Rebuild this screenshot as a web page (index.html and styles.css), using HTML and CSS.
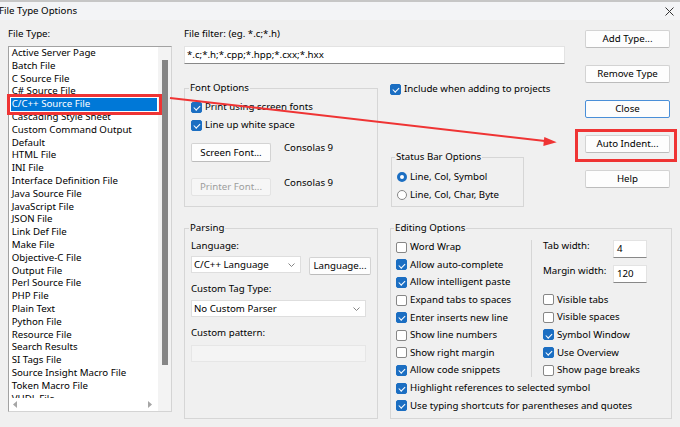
FILE: index.html
```html
<!DOCTYPE html>
<html>
<head>
<meta charset="utf-8">
<title>File Type Options</title>
<link rel="stylesheet" href="styles.css">
</head>
<body>
<div class="window">
  <header class="titlebar">
    <span class="title">File Type Options</span>
    <svg class="close" width="9" height="9" viewBox="0 0 9 9"><path d="M0.5 0.5L8.5 8.5M8.5 0.5L0.5 8.5" stroke="#333" stroke-width="1"/></svg>
  </header>
  <main class="body">
    <section class="col-list">
      <div class="label">File Type:</div>
      <div class="listbox">
        <div class="list-view">
          <ul class="items">
            <li>Active Server Page</li>
            <li>Batch File</li>
            <li>C Source File</li>
            <li>C# Source File</li>
            <li class="sel">C/C++ Source File</li>
            <li>Cascading Style Sheet</li>
            <li>Custom Command Output</li>
            <li>Default</li>
            <li>HTML File</li>
            <li>INI File</li>
            <li>Interface Definition File</li>
            <li>Java Source File</li>
            <li>JavaScript File</li>
            <li>JSON File</li>
            <li>Link Def File</li>
            <li>Make File</li>
            <li>Objective-C File</li>
            <li>Output File</li>
            <li>Perl Source File</li>
            <li>PHP File</li>
            <li>Plain Text</li>
            <li>Python File</li>
            <li>Resource File</li>
            <li>Search Results</li>
            <li>SI Tags File</li>
            <li>Source Insight Macro File</li>
            <li>Token Macro File</li>
            <li>VHDL File</li>
          </ul>
          <div class="hscroll">
            <svg width="4" height="7" viewBox="0 0 4 7"><path d="M4 0L0 3.5L4 7Z" fill="#a6a6a6"/></svg>
            <svg width="4" height="7" viewBox="0 0 4 7"><path d="M0 0L4 3.5L0 7Z" fill="#a6a6a6"/></svg>
          </div>
        </div>
        <div class="vscroll"><div class="thumb"></div></div>
      </div>
    </section>

    <section class="col-main">
      <div class="top">
        <div class="top-left">
          <div class="label">File filter: (eg. *.c;*.h)</div>
          <div class="input filter">*.c;*.h;*.cpp;*.hpp;*.cxx;*.hxx</div>
          <div class="mid-row">
            <fieldset class="group font-opts">
              <legend>Font Options</legend>
              <div class="row"><span class="cb on"></span><span>Print using screen fonts</span></div>
              <div class="row"><span class="cb on"></span><span>Line up white space</span></div>
              <div class="font-row first"><button class="btn">Screen Font...</button><span class="font-name">Consolas 9</span></div>
              <div class="font-row second"><button class="btn disabled">Printer Font...</button><span class="font-name">Consolas 9</span></div>
            </fieldset>
            <div class="mid-right">
              <div class="row include"><span class="cb on"></span><span>Include when adding to projects</span></div>
              <fieldset class="group status">
                <legend>Status Bar Options</legend>
                <div class="row"><span class="rb on"></span><span>Line, Col, Symbol</span></div>
                <div class="row"><span class="rb"></span><span>Line, Col, Char, Byte</span></div>
              </fieldset>
            </div>
          </div>
        </div>
        <div class="buttons">
          <button class="btn">Add Type...</button>
          <button class="btn">Remove Type</button>
          <button class="btn default">Close</button>
          <button class="btn">Auto Indent...</button>
          <button class="btn">Help</button>
        </div>
      </div>

      <div class="bottom">
        <fieldset class="group parsing">
          <legend>Parsing</legend>
          <div class="p-label">Language:</div>
          <div class="combo-row">
            <div class="combo lang"><span>C/C++ Language</span><svg width="7" height="4" viewBox="0 0 7 4"><path d="M0.5 0.5L3.5 3.5L6.5 0.5" fill="none" stroke="#777" stroke-width="0.9"/></svg></div>
            <button class="btn">Language...</button>
          </div>
          <div class="p-label l2">Custom Tag Type:</div>
          <div class="combo tag"><span>No Custom Parser</span><svg width="7" height="4" viewBox="0 0 7 4"><path d="M0.5 0.5L3.5 3.5L6.5 0.5" fill="none" stroke="#777" stroke-width="0.9"/></svg></div>
          <div class="p-label l3">Custom pattern:</div>
          <div class="disabled-input"></div>
        </fieldset>

        <fieldset class="group editing">
          <legend>Editing Options</legend>
          <div class="edit-cols">
            <div class="edit-left">
              <div class="erow"><span class="cb"></span><span>Word Wrap</span></div>
              <div class="erow"><span class="cb on"></span><span>Allow auto-complete</span></div>
              <div class="erow"><span class="cb on"></span><span>Allow intelligent paste</span></div>
              <div class="erow"><span class="cb"></span><span>Expand tabs to spaces</span></div>
              <div class="erow"><span class="cb on"></span><span>Enter inserts new line</span></div>
              <div class="erow"><span class="cb"></span><span>Show line numbers</span></div>
              <div class="erow"><span class="cb"></span><span>Show right margin</span></div>
              <div class="erow"><span class="cb on"></span><span>Allow code snippets</span></div>
            </div>
            <div class="edit-right">
              <div class="num-row"><span class="num-label">Tab width:</span><div class="input num">4</div></div>
              <div class="num-row m"><span class="num-label">Margin width:</span><div class="input num">120</div></div>
              <div class="checks">
                <div class="erow"><span class="cb"></span><span>Visible tabs</span></div>
                <div class="erow"><span class="cb"></span><span>Visible spaces</span></div>
                <div class="erow"><span class="cb on"></span><span>Symbol Window</span></div>
                <div class="erow"><span class="cb on"></span><span>Use Overview</span></div>
                <div class="erow"><span class="cb"></span><span>Show page breaks</span></div>
              </div>
            </div>
          </div>
          <div class="erow"><span class="cb on"></span><span>Highlight references to selected symbol</span></div>
          <div class="erow"><span class="cb on"></span><span>Use typing shortcuts for parentheses and quotes</span></div>
        </fieldset>
      </div>
    </section>
  </main>

  <div class="mark mark-list"></div>
  <div class="mark mark-indent"></div>
  <svg class="arrow" width="680" height="427" viewBox="0 0 680 427">
    <line x1="170" y1="98" x2="545" y2="140.9" stroke="#ef3434" stroke-width="2"/>
    <polygon points="556.7,142.3 543.3,146 544.3,136.9" fill="#ef3434"/>
  </svg>
</div>
</body>
</html>
```

FILE: styles.css
```css
* { box-sizing: border-box; }
html, body { margin: 0; padding: 0; }
body {
  background: #f0f0f0;
  font-family: "Noto Sans", "Segoe UI", sans-serif;
  font-size: 9.7px;
  line-height: 14px;
  color: #000;
}
.window {
  position: relative;
  width: 680px;
  height: 427px;
  overflow: hidden;
  background: #f0f0f0;
}

/* title bar */
.titlebar {
  height: 20px;
  border-top: 2px solid #c6c6c6;
  background: #f3f4f6;
  display: flex;
  align-items: center;
  justify-content: space-between;
  padding-right: 6px;
}
.title { margin-left: -1px; white-space: nowrap; }
.close { display: block; }

.body { display: flex; padding-left: 8px; }

/* list column */
.col-list { width: 164px; flex: none; }
.label { margin-top: 7px; height: 14px; white-space: nowrap; }
.listbox {
  margin-top: 5px;
  height: 366px;
  border: 1px solid;
  border-color: #a2a2a2 #d4d4d4 #d4d4d4 #a2a2a2;
  background: #fff;
  display: flex;
}
.list-view { width: 149px; display: flex; flex-direction: column; }
.items {
  list-style: none;
  margin: 0;
  padding: 0;
  height: 351px;
  overflow: hidden;
}
.items li {
  height: 12.8px;
  line-height: 12.8px;
  margin: 0 1px 0 2px;
  padding-left: 0.7px;
  white-space: nowrap;
}
.items li.sel { background: #0078d7; color: #fff; }
.hscroll {
  height: 13px;
  display: flex;
  align-items: center;
  justify-content: space-between;
  padding: 0 6px 0 4px;
}
.hscroll svg { display: block; }
.vscroll { width: 13px; background: #f3f3f3; }
.thumb {
  width: 6px;
  height: 305px;
  margin: 13px 0 0 4px;
  background: #868686;
}

/* main column */
.col-main { margin-left: 12px; flex: 1; }
.top { display: flex; }
.top-left { width: 381px; flex: none; }
.input {
  background: #fff;
  border: 1px solid #e3e3e3;
  border-bottom-color: #888;
  height: 18px;
  line-height: 16px;
  padding-left: 2px;
  white-space: nowrap;
}
.filter { margin-top: 5px; }
.mid-row { display: flex; margin-top: 17px; height: 126px; }

.group {
  margin: 0;
  min-width: 0;
  border: 1px solid #d6d6d6;
}
.group legend {
  padding: 0 1px;
  margin-left: -2px;
  line-height: 14px;
  white-space: nowrap;
}
.font-opts { width: 194px; height: 126px; padding: 3px 0 0 6px; }
.row {
  display: flex;
  align-items: center;
  gap: 3px;
  height: 18px;
  white-space: nowrap;
}
.font-row { display: flex; align-items: flex-start; }
.font-row.first { margin-top: 9px; }
.font-row.second { margin-top: 16px; }
.font-name { margin: -2px 0 0 13px; white-space: nowrap; }

.btn {
  font: inherit;
  color: inherit;
  background: #fdfdfd;
  border: 1px solid #d3d3d3;
  border-bottom-color: #bcbcbc;
  border-radius: 2px;
  height: 18px;
  padding: 0;
  line-height: 16px;
  text-align: center;
  white-space: nowrap;
}
.font-row .btn { width: 80px; }
.font-row.first .btn { height: 19px; }
.btn.disabled { color: #9d9d9d; background: #f6f6f6; border-color: #e3e3e3; }
.btn.default { border-color: #4a8fd8; }

.mid-right { margin-left: 12px; width: 134px; display: flex; flex-direction: column; }
.include { height: 16px; }
.status { width: 133px; height: 57px; margin: 53px 0 0 1px; padding: 4px 0 0 5px; }

.buttons {
  margin-left: 20px;
  padding-top: 10px;
  width: 85px;
  flex: none;
  display: flex;
  flex-direction: column;
  gap: 17px;
}

/* check boxes and radios */
.cb {
  position: relative;
  flex: none;
  width: 11px;
  height: 11px;
  border: 1px solid #868686;
  border-radius: 2px;
  background: #fff;
}
.cb.on { background: #1b6ec2; border-color: #1b6ec2; }
.cb.on::after {
  content: "";
  position: absolute;
  left: 3.2px;
  top: 1.2px;
  width: 2.6px;
  height: 5px;
  border: solid #fff;
  border-width: 0 1.1px 1.1px 0;
  transform: rotate(45deg);
}
.rb {
  flex: none;
  width: 10px;
  height: 10px;
  border: 1px solid #868686;
  border-radius: 50%;
  background: #fff;
}
.rb.on { border: 3px solid #1b6ec2; }

/* bottom groups */
.bottom { display: flex; margin-top: 14px; }
.parsing { width: 194px; height: 198px; padding: 4px 0 0 6px; flex: none; }
.p-label { height: 14px; white-space: nowrap; }
.p-label.l2 { margin-top: 7px; }
.p-label.l3 { margin-top: 9px; }
.combo-row { display: flex; align-items: flex-start; margin-top: 3px; }
.combo {
  background: #fff;
  border: 1px solid #dedede;
  height: 17px;
  display: flex;
  align-items: center;
  justify-content: space-between;
  padding: 0 5px 0 2px;
  white-space: nowrap;
}
.combo svg { display: block; }
.combo.lang { width: 110px; }
.combo-row .btn { margin: 1px 0 0 8px; width: 62px; }
.combo.tag { width: 175px; margin-top: 4px; }
.disabled-input {
  margin-top: 5px;
  width: 175px;
  height: 17px;
  background: #f4f4f4;
  border: 1px solid #e6e6e6;
}

.editing { width: 282px; height: 198px; margin-left: 12px; padding: 3.5px 0 0 5px; flex: none; }
.edit-cols { display: flex; }
.edit-left { width: 135px; flex: none; }
.erow {
  height: 17.6px;
  display: flex;
  align-items: center;
  gap: 3px;
  white-space: nowrap;
}
.edit-right {
  align-self: flex-start;
  margin-top: 1.5px;
  height: 137px;
  border-left: 1px solid #d6d6d6;
  padding-left: 11px;
  flex: 1;
}
.num-row { display: flex; align-items: flex-start; }
.num-row.m { margin-top: 7px; }
.num-label { width: 70px; margin-top: -1px; white-space: nowrap; }
.input.num { width: 34px; padding-left: 3px; }
.checks { margin-top: 8px; }

/* annotations */
.mark { position: absolute; border: 3px solid #ef3434; pointer-events: none; }
.mark-list { left: 7px; top: 94px; width: 155px; height: 20.5px; }
.mark-indent { left: 575px; top: 129px; width: 102px; height: 33px; }
.arrow { position: absolute; left: 0; top: 0; pointer-events: none; }
```
